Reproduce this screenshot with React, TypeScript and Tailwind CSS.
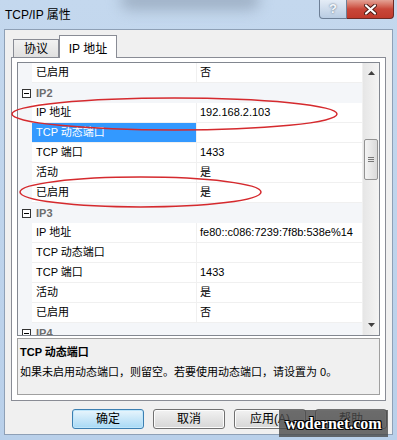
import React from "react";

type Row = { kind: "cat" | "prop"; name: string; value?: string; selected?: boolean };

const rows: Row[] = [
  { kind: "prop", name: "已启用", value: "否" },
  { kind: "cat", name: "IP2" },
  { kind: "prop", name: "IP 地址", value: "192.168.2.103" },
  { kind: "prop", name: "TCP 动态端口", value: "", selected: true },
  { kind: "prop", name: "TCP 端口", value: "1433" },
  { kind: "prop", name: "活动", value: "是" },
  { kind: "prop", name: "已启用", value: "是" },
  { kind: "cat", name: "IP3" },
  { kind: "prop", name: "IP 地址", value: "fe80::c086:7239:7f8b:538e%14" },
  { kind: "prop", name: "TCP 动态端口", value: "" },
  { kind: "prop", name: "TCP 端口", value: "1433" },
  { kind: "prop", name: "活动", value: "是" },
  { kind: "prop", name: "已启用", value: "否" },
  { kind: "cat", name: "IP4" },
];

const MinusBox = () => (
  <svg width="9" height="9" viewBox="0 0 9 9">
    <rect x="0.5" y="0.5" width="8" height="8" fill="#fff" stroke="#333" />
    <path d="M2 4.5h5" stroke="#000" />
  </svg>
);

const GridRow = ({ row }: { row: Row }) => {
  if (row.kind === "cat") {
    return (
      <div className="flex h-[20px] shrink-0 items-center bg-[#f4f6f9]">
        <div className="flex w-[14px] justify-center pl-[2px]">
          <MinusBox />
        </div>
        <span className="pl-[4px] font-bold text-[#6d6d6d]">{row.name}</span>
      </div>
    );
  }
  return (
    <div className="flex h-[20px] shrink-0">
      <div className="w-[14px] bg-[#f4f6f9]" />
      <div
        className={
          row.selected
            ? "flex w-[164px] items-center border-b border-[#f0f0f0] bg-[#3399ff] pl-[4px] text-white"
            : "flex w-[164px] items-center border-b border-[#f0f0f0] pl-[4px]"
        }
      >
        {row.name}
      </div>
      <div className="flex flex-1 items-center border-b border-l border-[#f0f0f0] pl-[3px]">{row.value}</div>
    </div>
  );
};

const ScrollBar = () => (
  <div className="flex w-[17px] flex-col items-center border-l border-[#f0f0f0] bg-gradient-to-r from-[#e6e6e6] to-[#f4f4f4]">
    <div className="flex h-[20px] items-center justify-center">
      <svg width="7" height="4" viewBox="0 0 7 4">
        <path d="M0 4L3.5 0L7 4Z" fill="#404040" />
      </svg>
    </div>
    <div className="mt-[56px] flex h-[41px] w-[14px] items-center justify-center rounded-[2px] border border-[#939393] bg-gradient-to-r from-[#f4f4f4] to-[#dadada]">
      <div className="flex flex-col gap-[1px]">
        <div className="h-px w-[6px] bg-[#777]" />
        <div className="h-px w-[6px] bg-[#777]" />
        <div className="h-px w-[6px] bg-[#777]" />
      </div>
    </div>
    <div className="mt-auto flex h-[20px] items-center justify-center">
      <svg width="7" height="4" viewBox="0 0 7 4">
        <path d="M0 0L3.5 4L7 0Z" fill="#404040" />
      </svg>
    </div>
  </div>
);

const DlgButton = ({ label, primary }: { label: string; primary?: boolean }) => (
  <button
    type="button"
    className={
      primary
        ? "h-[20px] w-[72px] rounded-[3px] border border-[#3c7fb1] bg-gradient-to-b from-[#e8f5fc] to-[#a7d9f5] text-[12px] shadow-[inset_0_0_0_1px_#bfe6fb]"
        : "h-[20px] w-[72px] rounded-[3px] border border-[#707070] bg-gradient-to-b from-[#f2f2f2] to-[#d6d6d6] text-[12px] shadow-[inset_0_0_0_1px_#fcfcfc]"
    }
  >
    {label}
  </button>
);

export default function App() {
  return (
    <div className="relative h-[440px] w-[397px] overflow-hidden bg-gradient-to-b from-[#c4d8ee] to-[#b9d0ea] font-['Liberation_Sans','Noto_Sans_CJK_SC',sans-serif] text-[11px] text-black">
      {/* blurred glass behind the title bar */}
      <div className="pointer-events-none absolute left-[120px] top-[-10px] h-[20px] w-[140px] rounded-full bg-[#8797ab]/60 blur-[7px]" />

      {/* title bar */}
      <div className="relative flex h-[29px] items-start">
        <span className="pl-[5px] pt-[6px] text-[12px]">TCP/IP 属性</span>
        <div className="ml-auto mr-[3px] flex">
          <div className="flex h-[19px] w-[28px] items-center justify-center rounded-bl-[4px] border border-t-0 border-[#6d7f96] bg-gradient-to-b from-[#e4ecf6] to-[#b9cce2] text-[13px] font-bold text-[#f4f7fb] [text-shadow:0_0_2px_#4d5d70]">
            ?
          </div>
          <div className="flex h-[19px] w-[47px] items-center justify-center rounded-br-[4px] border border-l-0 border-t-0 border-[#6d2a24] bg-gradient-to-b from-[#e3a195] via-[#c9473a] to-[#c03a2c]">
            <svg width="13" height="11" viewBox="0 0 13 11">
              <path d="M2 1.5L11 9.5M11 1.5L2 9.5" stroke="#4a1a14" strokeWidth="4" strokeLinecap="round" />
              <path d="M2 1.5L11 9.5M11 1.5L2 9.5" stroke="#fff" strokeWidth="2.2" strokeLinecap="round" />
            </svg>
          </div>
        </div>
      </div>

      {/* client area */}
      <div className="relative mx-[4px] flex h-[406px] flex-col border border-[#8ea0b6] bg-[#f0f0f0]">
        {/* tabs */}
        <div className="flex h-[27px] items-end pl-[8px]">
          <div className="flex h-[18px] w-[46px] items-center justify-center border border-b-0 border-[#898c95] bg-gradient-to-b from-[#f2f2f2] to-[#e0e0e0] pt-[1px] text-[12px]">
            协议
          </div>
          <div className="relative z-10 -mb-px flex h-[23px] w-[58px] items-start justify-center border border-b-0 border-[#898c95] bg-white pt-[4px] text-[12px]">
            IP 地址
          </div>
        </div>

        {/* tab page */}
        <div className="ml-[6px] flex h-[344px] w-[375px] flex-col border border-[#898c95] bg-white px-[5px] pt-[4px]">
          <div className="flex h-[274px] w-[363px] border border-[#828790]">
            <div className="flex flex-1 flex-col overflow-hidden">
              {rows.map((row, i) => (
                <GridRow key={i} row={row} />
              ))}
            </div>
            <ScrollBar />
          </div>
          <div className="mt-[2px] h-[57px] w-[363px] border border-[#a0a0a0] bg-[#f0f0f0] px-[2px] pt-[6px] leading-[14px]">
            <div className="font-bold">TCP 动态端口</div>
            <div className="mt-[6px]">如果未启用动态端口，则留空。若要使用动态端口，请设置为 0。</div>
          </div>
        </div>

        {/* buttons */}
        <div className="mt-[8px] flex justify-end gap-[9px] pr-[5px]">
          <DlgButton label="确定" primary />
          <DlgButton label="取消" />
          <DlgButton label="应用(A)" />
          <DlgButton label="帮助" />
        </div>
      </div>

      {/* red annotation ellipses */}
      <svg className="pointer-events-none absolute left-0 top-0" width="397" height="440">
        <ellipse cx="174.5" cy="114" rx="162.5" ry="16" fill="none" stroke="#d52a2e" strokeWidth="1.5" />
        <ellipse cx="140.5" cy="192" rx="120.5" ry="15" fill="none" stroke="#d52a2e" strokeWidth="1.5" />
      </svg>

      {/* watermark */}
      <div className="absolute left-[279px] top-[410px] flex h-[27px] w-[109px] items-center justify-center bg-[#4a4a4a]/80 font-['Liberation_Serif',serif] text-[16px] font-bold text-white [text-shadow:1px_1px_0_#000,-1px_-1px_0_#000,1px_-1px_0_#000,-1px_1px_0_#000]">
        wodernet.com
      </div>
    </div>
  );
}
